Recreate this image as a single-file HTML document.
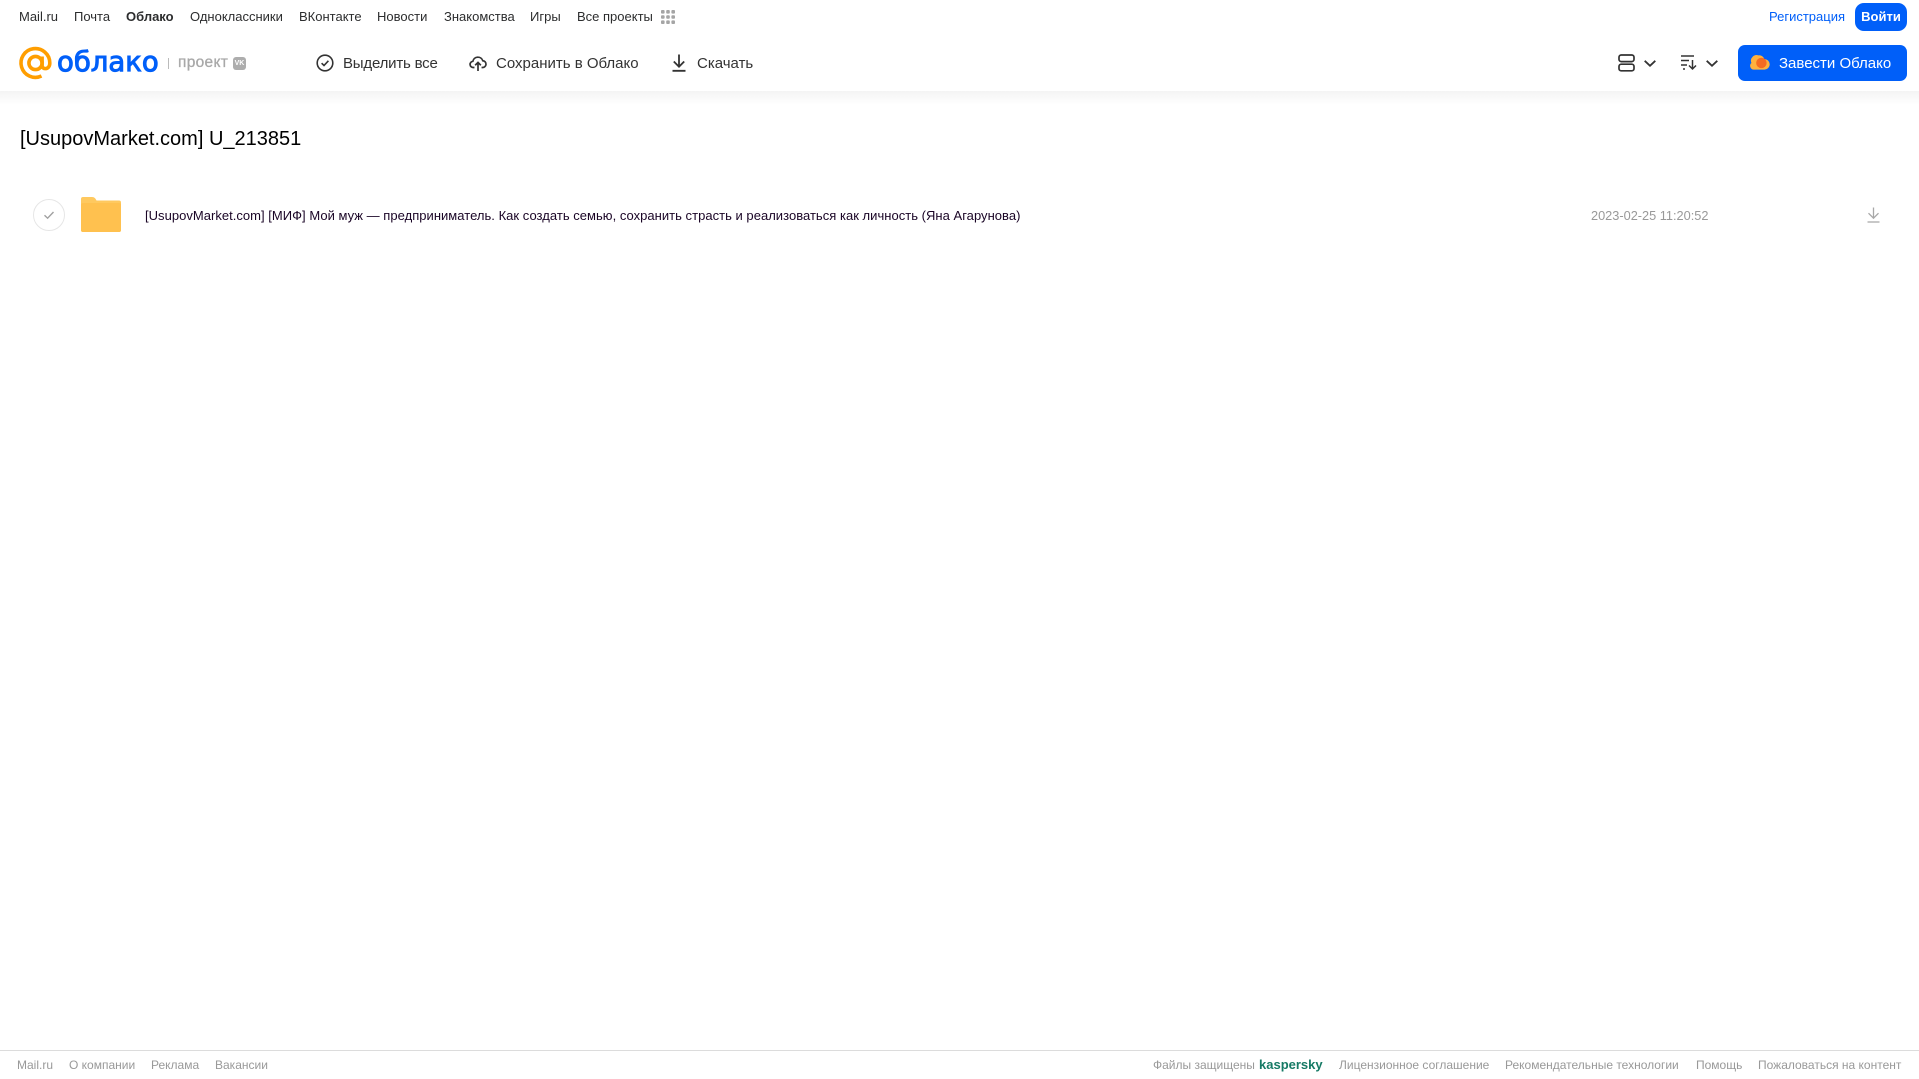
<!DOCTYPE html>
<html lang="ru"><head><meta charset="utf-8"><title>Облако</title>
<style>
html,body{margin:0;padding:0;background:#fff}
body{width:1919px;height:1079px;position:relative;overflow:hidden;font-family:"Liberation Sans",sans-serif}
.t{position:absolute;white-space:nowrap;line-height:20px;font-size:13px;color:#2c2d2e}
.n{top:7px}
.a{top:54px;font-size:15px;color:#333}
.f{top:1055px;font-size:12px;color:#999}
svg{position:absolute;overflow:visible}
</style></head><body>
<div style="position:absolute;left:0;top:91px;width:1919px;height:14px;background:linear-gradient(#f4f4f4,#fff)"></div>

<span class="t n" style="left:19px">Mail.ru</span>
<span class="t n" style="left:74px">Почта</span>
<span class="t n" style="left:126px;font-weight:bold">Облако</span>
<span class="t n" style="left:190px">Одноклассники</span>
<span class="t n" style="left:299px">ВКонтакте</span>
<span class="t n" style="left:377px">Новости</span>
<span class="t n" style="left:444px">Знакомства</span>
<span class="t n" style="left:530px">Игры</span>
<span class="t n" style="left:577px">Все проекты</span>
<svg style="left:661px;top:10px" width="14" height="14" fill="#a5a5a5"><rect x="0" y="0" width="3.6" height="3.6" rx="1"/><rect x="5.2" y="0" width="3.6" height="3.6" rx="1"/><rect x="10.4" y="0" width="3.6" height="3.6" rx="1"/><rect x="0" y="5.2" width="3.6" height="3.6" rx="1"/><rect x="5.2" y="5.2" width="3.6" height="3.6" rx="1"/><rect x="10.4" y="5.2" width="3.6" height="3.6" rx="1"/><rect x="0" y="10.4" width="3.6" height="3.6" rx="1"/><rect x="5.2" y="10.4" width="3.6" height="3.6" rx="1"/><rect x="10.4" y="10.4" width="3.6" height="3.6" rx="1"/></svg>

<span class="t n" style="left:1769px;color:#005ff9">Регистрация</span>
<div style="position:absolute;left:1855px;top:3px;width:52px;height:28px;border-radius:9px;background:#005ff9;color:#fff;font-size:13px;font-weight:bold;text-align:center;line-height:27px">Войти</div>

<svg style="left:19px;top:47px" width="33" height="33" viewBox="0 0 33 33" fill="none" stroke="#ff9e00" stroke-width="3.6"><circle cx="16.5" cy="16" r="6.6"/><path d="M23.1 9.5V18.5C23.1 23 30.8 23 30.8 16A14.4 14.4 0 1 0 22.5 29"/></svg>
<span class="t" style="left:57px;top:41px;line-height:42px;font-family:'DejaVu Sans',sans-serif;font-size:27.5px;-webkit-text-stroke:1px #005ff9;color:#005ff9">облако</span>
<div style="position:absolute;left:168px;top:58px;width:1px;height:11px;background:#bbb"></div>
<span class="t" style="left:178px;top:53px;font-size:15.5px;-webkit-text-stroke:.3px #a8a8a8;color:#a8a8a8;letter-spacing:.3px">проект</span>
<div style="position:absolute;left:233px;top:57px;width:13px;height:13px;border-radius:3px;background:#adadad;color:#fff;font-size:7px;font-weight:bold;line-height:13px;text-align:center">VK</div>

<svg style="left:316px;top:54px" width="18" height="18" viewBox="0 0 18 18" fill="none" stroke="#333" stroke-width="1.6"><circle cx="9" cy="9" r="7.8"/><path d="M5.6 9.2L8 11.5L12.4 6.8"/></svg>
<span class="t a" style="left:343px;letter-spacing:-.2px">Выделить все</span>
<svg style="left:470px;top:55px" width="16" height="17" viewBox="0 0 18 19" fill="none" stroke="#333" stroke-width="1.9"><path d="M5 14H4A3.5 3.5 0 0 1 3.2 7 5.8 5.8 0 0 1 14.4 6.4 3.8 3.8 0 0 1 14 14H13"/><path d="M9 18V8.5M5.8 11.5L9 8.3L12.2 11.5"/></svg>
<span class="t a" style="left:496px">Сохранить в Облако</span>
<svg style="left:672px;top:54px" width="14" height="18" viewBox="0 0 14 18" fill="none" stroke="#333" stroke-width="1.8"><path d="M7 0.5V12.5M1.8 7.5L7 12.7L12.2 7.5M0.5 16.8H13.5"/></svg>
<span class="t a" style="left:697px">Скачать</span>

<svg style="left:1618px;top:54px" width="17" height="18" viewBox="0 0 17 18" fill="none" stroke="#333" stroke-width="1.7"><rect x="1" y="1" width="15" height="6.6" rx="2.2"/><rect x="1" y="10.2" width="15" height="6.6" rx="2.2"/></svg>
<svg style="left:1644px;top:60px" width="12" height="7" viewBox="0 0 12 7" fill="none" stroke="#333" stroke-width="1.8"><path d="M0.7 0.8L6 5.8L11.3 0.8"/></svg>
<svg style="left:1681px;top:55px" width="16" height="15" viewBox="0 0 16 15" fill="none" stroke="#333" stroke-width="1.5"><path d="M0 1H13M0 5.5H8M0 10H6M2 14H4M11.5 5V14M8 10.5L11.5 14L15 10.5"/></svg>
<svg style="left:1706px;top:60px" width="12" height="7" viewBox="0 0 12 7" fill="none" stroke="#333" stroke-width="1.8"><path d="M0.7 0.8L6 5.8L11.3 0.8"/></svg>

<div style="position:absolute;left:1738px;top:45px;width:169px;height:36px;border-radius:7px;background:#005ff9"></div>
<svg style="left:1750px;top:54px" width="19" height="16" viewBox="0 0 20 16"><path d="M4 16A4 4 0 0 1 1.5 9 6 6 0 0 1 9 1 5.5 5.5 0 0 1 15 5 5.5 5.5 0 0 1 15.5 16Z" fill="#ffb13d"/><circle cx="12" cy="9" r="5.5" fill="#f46b22"/></svg>
<span class="t a" style="left:1779px;color:#fff">Завести Облако</span>

<span class="t" style="left:20px;top:125px;line-height:28px;font-size:20px;color:#000">[UsupovMarket.com] U_213851</span>

<svg style="left:33px;top:199px" width="32" height="32" viewBox="0 0 32 32" fill="none"><circle cx="16" cy="16" r="15.5" stroke="#e6e6e6"/><path d="M11.5 16.3L14.6 19.2L20.5 13" stroke="#a0a0a0" stroke-width="1.4"/></svg>
<svg style="left:81px;top:197px" width="40" height="35" viewBox="0 0 40 35"><path d="M2 0H11C13.5 0 14.5 1.5 15.5 3.5H38A2 2 0 0 1 40 5.5V33A2 2 0 0 1 38 35H2A2 2 0 0 1 0 33V2A2 2 0 0 1 2 0Z" fill="#ffc95f"/><rect x="0" y="6" width="40" height="29" rx="2" fill="#ffc14f"/></svg>
<span class="t" style="left:145px;top:206px;font-size:13px;letter-spacing:.025px;color:#1a0526">[UsupovMarket.com] [МИФ] Мой муж — предприниматель. Как создать семью, сохранить страсть и реализоваться как личность (Яна Агарунова)</span>
<span class="t" style="left:1591px;top:206px;font-size:12.75px;color:#999">2023-02-25 11:20:52</span>
<svg style="left:1867px;top:207px" width="13" height="16" viewBox="0 0 13 16" fill="none" stroke="#a8a8a8" stroke-width="1.3"><path d="M6.5 0.5V11M1.5 6.2L6.5 11.2L11.5 6.2M0.5 15H12.5"/></svg>

<div style="position:absolute;left:0;top:1050px;width:1919px;height:1px;background:#dcdcdc"></div>
<span class="t f" style="left:17px">Mail.ru</span>
<span class="t f" style="left:69px">О компании</span>
<span class="t f" style="left:151px">Реклама</span>
<span class="t f" style="left:215px">Вакансии</span>
<span class="t f" style="left:1153px">Файлы защищены</span>
<span class="t f" style="left:1259px;font-size:13px;font-weight:bold;color:#167a65">kaspersky</span>
<span class="t f" style="left:1339px">Лицензионное соглашение</span>
<span class="t f" style="left:1505px">Рекомендательные технологии</span>
<span class="t f" style="left:1696px">Помощь</span>
<span class="t f" style="left:1758px">Пожаловаться на контент</span>
</body></html>
